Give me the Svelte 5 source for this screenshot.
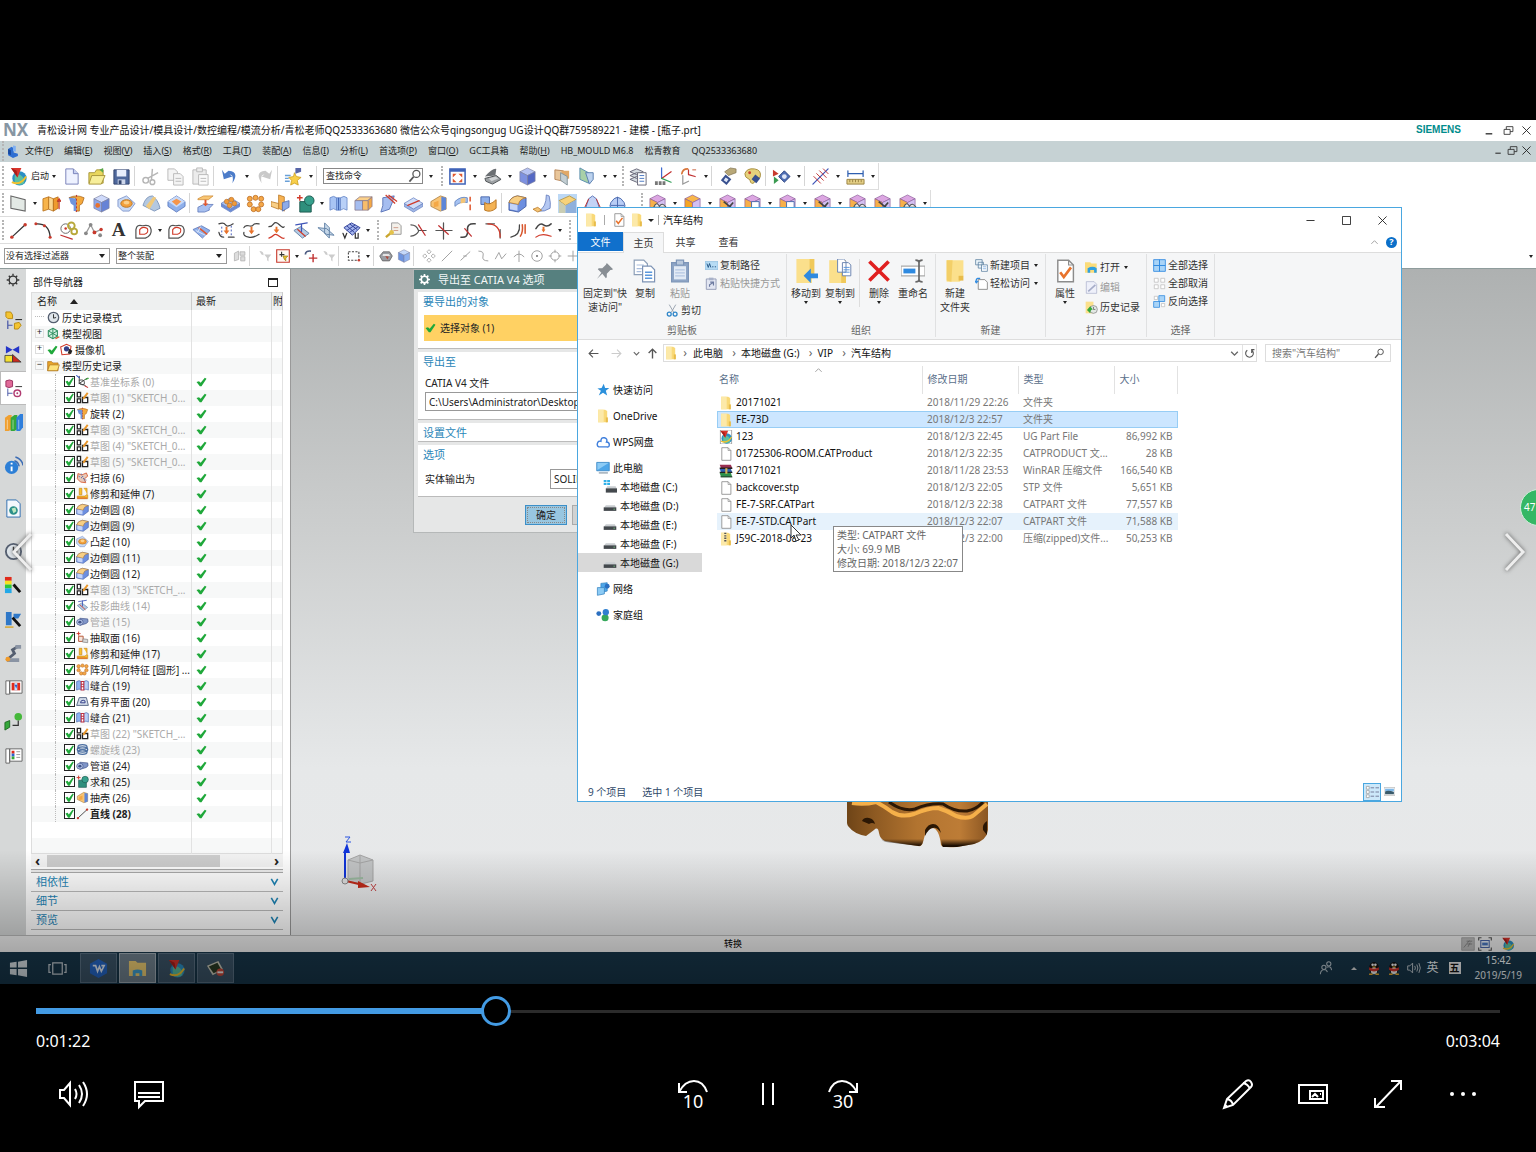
<script>
  const cube = (a, b, c, s = '#7d82a0') =>
    `<g stroke="${s}" stroke-width=".7" stroke-linejoin="round"><path fill="${a}" d="M10 1l8 4-8 4-8-4z"/><path fill="${b}" d="M2 5l8 4v10l-8-4z"/><path fill="${c}" d="M10 9l8-4v10l-8 4z"/></g>`;
  const slab = (a, b, s = '#6d86c4') =>
    `<g stroke="${s}" stroke-width=".8" stroke-linejoin="round"><path fill="${a}" d="M0 10l10-6 10 6-10 6z"/><path fill="${b}" d="M0 10v3l10 6 10-6v-3l-10 6z"/></g>`;
  const curve = (d, c = '#333', w = 1.3) => `<path d="${d}" fill="none" stroke="${c}" stroke-width="${w}" stroke-linecap="round"/>`;
  const purple = (extra) => cube('#dca6e2', '#f7b04a', '#d3c0f2', '#8b5c9a') + extra;
  const nxBall =
    '<circle cx="11" cy="12" r="7.5" fill="#2b8fc4"/><path d="M6 9q4-3 8 1t1 8q-6 2-9-2z" fill="#5cc0a0"/><path d="M3 16q9 4 15-6" fill="none" stroke="#f2c12e" stroke-width="2"/><path d="M2 1l11 0-4 10z" fill="#d8342c"/><path d="M2 1l6 3 1 7z" fill="#a81e1a"/>';
  const folder = '<path fill="#f9d978" d="M3 1h10l3 2v16H3z"/><path fill="#fce9a9" d="M3 1h8v18H3z"/><path fill="#e8bc4b" d="M14 12h3v7h-3z"/>';
  const file = '<path fill="#fff" stroke="#8c8c8c" stroke-width="1.2" d="M4 1h9l4 4v14H4z"/><path fill="none" stroke="#8c8c8c" d="M13 1v4h4"/>';
  const bluePage = '<path fill="#fff" stroke="#8d9fb8" d="M1 1h8l3 3v9H1z"/><path stroke="#a9bddd" d="M3 5h6M3 8h6M3 10.500h4"/><path fill="#fff" stroke="#7d93b5" d="M8 6h7l3 3v10H8z"/><path stroke="#5b97dc" stroke-width="1.200" d="M10 11h6M10 13.500h6M10 16h6"/>';

  const art = {
    nx: nxBall,
    part: '<path d="M3 7l5-3 3 2v6l6 2v3l-7 3-7-4z" fill="#2e6fd2"/><path d="M10 2l4 1v8l-4-1z" fill="#7fb0f2"/><path d="M3 7l4 2v7l-4-2z" fill="#174aa0"/>',
    doc: '<path fill="#eef2ff" stroke="#7882b8" d="M4 2h8l5 5v11H4z"/><path fill="#c6d0f2" stroke="#7882b8" d="M12 2v5h5"/>',
    open: '<path fill="#e9d75e" stroke="#a8963a" d="M2 6h6l2-3h7v14H2z"/><path fill="#f7ee9a" stroke="#a8963a" d="M5 9h14l-4 9H2z"/><path fill="#5aa84c" d="M13 3l4-2v5z"/>',
    save: '<path fill="#4f689c" stroke="#33456e" d="M2 3h16v15H2z"/><path fill="#e8eefc" d="M5 3h10v7H5z"/><path fill="#cdd6ea" d="M6 13h8v5H6z"/><path fill="#33456e" d="M7 14h3v4H7z"/>',
    cut: '<g fill="none" stroke="#b5b5b5" stroke-width="1.500"><circle cx="5" cy="14" r="3"/><circle cx="12" cy="16" r="2.500"/><path d="M7 12l11-6M11 14L12 2"/></g>',
    copy: '<g fill="#f4f4f4" stroke="#b9b9b9"><path d="M2 2h7l3 3v9H2z"/><path d="M8 7h7l3 3v9H8z"/><path d="M10 12h6M10 15h6"/></g>',
    paste: '<g fill="#ececec" stroke="#b9b9b9"><path d="M2 3h14v15H2z"/><path d="M6 1h6v4H6z"/><path fill="#fafafa" d="M8 8h10v11H8z"/><path d="M10 12h6M10 15h6"/></g>',
    undo: '<path fill="#4c7cc9" d="M2 3l2 10 9-3-3-2q5 0 3 9 8-12-4-13L5 7z"/>',
    redo: '<path fill="#c9c9c9" d="M18 3l-2 10-9-3 3-2q-5 0-3 9-8-12 4-13l4 3z"/>',
    star: '<path fill="#f8cf4a" stroke="#c99a1c" stroke-width=".8" d="M11 6l2 4 5 1-4 3 1 5-4-2-4 2 1-5-3-3 5-1z"/><path stroke="#6aa0d8" stroke-width="1.500" d="M1 9h6M1 12h4M1 15h5"/><path fill="#5866a8" d="M12 1h6v4l-6 2z"/>',
    fit: '<path fill="#fff" stroke="#3f63b8" stroke-width="1.600" d="M2 2h16v16H2z"/><path fill="#3f63b8" d="M2 2h16v3H2z"/><g fill="#e0582f"><path d="M5 7h4l-4 4zM15 7h-4l4 4zM5 16h4l-4-4zM15 16h-4l4-4z"/></g>',
    view: '<path fill="#6b6f73" d="M2 10q8-9 12-8l-1 7z"/><path fill="#9da1a4" stroke="#4c5053" d="M2 12l12-3 5 4-9 5-7-3z"/><path fill="#d0d3d5" d="M6 12l7-2 3 2-7 3z"/>',
    shade: cube('#b5c2f2', '#7d91e0', '#5468c4'),
    clip: '<path fill="#e9c69a" stroke="#b8875a" d="M2 3l9 1v11l-9-2z"/><path fill="#e0a868" d="M9 4h8v8l-8 2z"/><path fill="#c3ced3" stroke="#84939b" d="M8 6l7 4v9l-7-5z"/>',
    clip2: '<path fill="#a8d0a8" stroke="#5b8fb0" d="M2 1l9 5v11L2 13z"/><path fill="#bcd2ee" stroke="#5b7fb0" d="M8 6l8 0v7l-4 5z"/>',
    layers: '<g fill="#d5dbe0" stroke="#667"><path d="M1 5l7-3 7 3-7 3zM1 9l7-3 7 3-7 3zM1 13l7-3 7 3-7 3z"/><path fill="#fff" d="M9 6h9v13H9z"/></g><path stroke="#4a78c2" d="M11 9h5M11 12h5M11 15h5"/>',
    csys: curve('M8 12V1', '#3e6bd0') + curve('M8 12l10-7', '#c03030') + curve('M8 12l10 4', '#35a05a') + '<path d="M1 15h3v4H1zM5 15h3v4H5zM9 15h3v4H9z" fill="#777"/>',
    csys2: curve('M10 8V3M10 8l7 2', '#c03030') + curve('M3 7q1-5 6-5', '#d8763a', 1.8) + curve('M4 9v9l6-3', '#999') + '<path d="M14 3h4" stroke="#c8603a"/>',
    show: '<path fill="#38508f" d="M8 8l6 5-5 6-6-5z"/><path fill="#dfe6f7" d="M8 11l3 2-2 3-3-2z"/><path fill="#b8a878" stroke="#7a6d4a" stroke-width=".7" d="M7 5l6-4 6 1v4l-8 3z"/>',
    palette: '<path fill="#e6d17c" stroke="#a58c3a" d="M2 7q2-6 10-5t6 9q-4 0-5 4-3 4-5 1 0-3-3-4-3-1-3-5z"/><circle cx="7" cy="6" r="1.500" fill="#c9412d"/><path fill="#38508f" d="M13 8l5 4-4 5-5-4z"/>',
    move: '<path fill="#c83a2d" d="M1 3l6 4-6 3z"/><path fill="#3a9a50" d="M2 10l5 4-5 4z"/><path fill="#4f6fb5" stroke="#2e4582" d="M13 4l6 6-6 6-6-6z"/><circle cx="13" cy="10" r="2.500" fill="#dfe6f7"/>',
    measure: curve('M2 18L18 2', '#3f55b8') + curve('M3 10l7 7M6 7l7 7M9 4l7 7M13 2l5 5', '#c03030', 1),
    ruler: curve('M2 4v6M18 4v6M2 7h16', '#2f5fb0') + '<path fill="#e4cf86" stroke="#9a8342" d="M1 13h18v5H1z"/><path stroke="#9a8342" d="M4 13v3M7 13v3M10 13v3M13 13v3M16 13v3"/>',
    sketch: '<path fill="#e3e9e5" stroke="#666" stroke-width="1.100" d="M2 2l15 4v12L2 15z"/>',
    extrude: '<g stroke="#b36a14" stroke-width=".8"><path fill="#f7b44c" d="M1 5l6-2v13l-6 2z"/><path fill="#fbd68f" d="M7 3l5 2v13l-5-2z"/><path fill="#ef9a2d" d="M12 5l5-2v12l-5 3z"/></g><path stroke="#d03a2a" stroke-width="1.300" d="M18 6v10M16 8l2-3 2 3"/>',
    revolve: '<path fill="#f5a93c" stroke="#a8641a" stroke-width=".8" d="M2 4q8-4 16 0l-2 6-3 2v6H9V4z"/><path fill="#6f94dc" d="M10 5q-5-1-8-1l2 6 3 2v6h3z"/><path stroke="#c03030" stroke-dasharray="2" d="M10 1v18"/>',
    blueHole: cube('#cfdafa', '#8ea8ec', '#6683d6') + '<circle cx="6" cy="12" r="2.500" fill="#e8732c"/>',
    boss: '<path fill="#c9daf5" stroke="#6d86c4" stroke-width=".8" d="M1 6l9-4 9 8-6 8H6L1 13z"/><ellipse cx="10" cy="10" rx="6" ry="4" fill="#f3a03a" stroke="#b8782a"/><ellipse cx="10" cy="9" rx="3" ry="2" fill="#fbd08a"/>',
    dome: '<path fill="#b4c8e0" stroke="#6a86b0" stroke-width=".8" d="M1 12q3-10 10-10 6 4 8 13l-6 3z"/><path fill="#f0c97c" d="M4 13l8-10 3 1-7 12z"/>',
    pocket: '<path fill="#8fb0ea" stroke="#4c6cb8" stroke-width=".8" d="M1 8l9-6 9 6v5l-9 6-9-6z"/><path fill="#c9daf7" d="M1 8l9-6 9 6-9 6z"/><path fill="#f5954a" d="M5 8l5-3 5 3-5 4z"/>',
    offset: '<path fill="#a8c0f0" stroke="#5a74b8" stroke-width=".8" d="M2 14l6-3h10l-4 4v2l-5 2H2z"/><path fill="#f9c673" stroke="#c8842a" stroke-width=".7" d="M2 5l6-3h10l-5 4H2z"/><path fill="#e0582f" d="M9 6h2v4h2l-3 3-3-3h2z"/>',
    blobs: slab('#a8c0f0', '#6a8bd6') + '<g fill="#f09a3a" stroke="#b86a1a" stroke-width=".6"><circle cx="6" cy="8" r="2.500"/><circle cx="11" cy="6" r="2.500"/><circle cx="14" cy="10" r="2.500"/><circle cx="9" cy="12" r="2.500"/></g>',
    pattern: '<g fill="#f5a848" stroke="#b8661a" stroke-width=".8"><circle cx="4" cy="5" r="2.600"/><circle cx="10" cy="4" r="2.600"/><circle cx="16" cy="5" r="2.600"/><circle cx="4" cy="11" r="2.600"/><circle cx="16" cy="11" r="2.600"/><circle cx="8" cy="16" r="2.600"/><circle cx="13" cy="16" r="2.600"/></g>',
    trim: '<path fill="#f6b252" stroke="#b87420" stroke-width=".8" d="M8 1l6 2v15l-6-3z"/><path fill="#8dabe8" stroke="#4a68ad" stroke-width=".8" d="M12 9l7-2v7l-7 4z"/><path fill="#f9cf86" stroke="#b87420" stroke-width=".8" d="M0 8l8 2v6l-8-3z"/>',
    unite: '<path fill="#2e8f7c" stroke="#1d5a50" d="M4 8h12v11H4z"/><circle cx="14" cy="7" r="5" fill="#36a08c" stroke="#1d5a50"/><path stroke="#d03a2a" stroke-width="1.500" d="M4 1v6M1 4h6"/>',
    sew: '<g stroke="#5f80c4" stroke-width=".8"><path fill="#a8c4f4" d="M1 4q4-3 7 0v13q-3-3-7 0z"/><path fill="#8db2f0" d="M8 4h4v13H8z"/><path fill="#b9d0f7" d="M12 4q4-3 7 0v13q-4-3-7 0z"/></g><path stroke="#3f62b0" d="M10 4v13"/>',
    sewRed: '<g stroke="#3f62b0"><path fill="#8db2f0" d="M1 4q4-3 7 0v13q-3-3-7 0z"/><path fill="#b9d0f7" d="M12 4q4-3 7 0v13q-4-3-7 0z"/></g><path fill="#fff" stroke="#c03040" stroke-width="1.600" d="M8 4h4v13H8zM8 8h4M8 12h4"/>',
    thicken: '<g stroke="#8a7a8a" stroke-width=".8"><path fill="#fbd08a" d="M1 7l5-4h13l-5 4z"/><path fill="#a5bdf0" d="M1 7h8v10H1z"/><path fill="#f8bd6a" d="M9 7h6v10H9z"/><path fill="#f4a845" d="M15 7l4-4v10l-4 4z"/></g>',
    sheet: '<path fill="#a5bdf0" stroke="#5a74b8" d="M4 4l12-2q-2 8-5 14l-9 3q3-6 2-15z"/><path stroke="#d03a2a" stroke-width="1.300" d="M7 1l10 9M10 1l9 7"/>',
    trimSheet: slab('#cfdcf7', '#9fb6e6') + curve('M4 12l12-5', '#d03a2a'),
    shell: '<path fill="#f8c474" stroke="#a87a3a" stroke-width=".8" d="M2 8l10-6 6 2v12l-6 2-10-5z"/><path fill="#5d86d8" d="M13 3l5 1v12l-5 2z"/><path fill="#f4a845" d="M5 9l5-2v6l-5 1z"/>',
    bend: '<path fill="#a5c2f2" stroke="#6d8cc4" d="M1 8q6-6 13-4v5Q7 7 1 13z"/><path fill="#f4c475" d="M7 5l5-1v5l-5 1z"/><path stroke="#e0582f" stroke-width="1.600" d="M17 3v5M17 11v6"/>',
    flange: '<path fill="#8fb0ea" stroke="#4a68ad" d="M2 3h9v8H2z"/><path fill="#f4b355" stroke="#b87420" d="M6 9q5 4 12-3v9q-6 5-12 2z"/>',
    blend: '<path fill="#6d8fe0" stroke="#2f4c96" stroke-width=".8" d="M1 9q2-6 9-7l9 2v9l-8 6-10-2z"/><path fill="#f8cf84" stroke="#b87a2a" stroke-width=".8" d="M1 9q2-6 9-7l9 2q-7 1-8 7z"/><path fill="#c4d4f8" d="M2 10l8 1.500v6L2 16z"/>',
    sweep: '<path fill="#b5c8f2" stroke="#5a74b8" stroke-width=".8" d="M14 1l3 1q2 8 1 13-6 4-12 3 8-4 8-17z"/><path fill="#f4c475" stroke="#b87420" stroke-width=".8" d="M0 16l5-2 4 3-4 2z"/>',
    face: '<path fill="#bcd8f5" d="M0 0h20v20H0z"/><path fill="#f7d27a" stroke="#b89a4a" d="M1 7l11-5 7 4-11 6z"/><path fill="#c9cdb4" d="M1 7l7 5v8H1z"/><path fill="#8fb0dc" d="M8 12l11-6v14H8z"/>',
    draft: '<path fill="#c4d2f5" stroke="#5a74b8" d="M6 5l4-3 4 3 3 9-7 4-7-4z"/><path stroke="#c03030" d="M6 5L1 16M14 5l5 11"/>',
    mesh: '<path fill="#b9cdf5" stroke="#4a68ad" d="M3 9q7-11 14 0l1 4-8 6-8-6z"/><path fill="none" stroke="#4a68ad" d="M3 12h14M10 3v15"/>',
    pu1: purple('<path fill="#eee" stroke="#555" stroke-width="1.100" d="M6 14q3-7 6-1 3-5 7 1z"/>'),
    pu2: cube('#f8b64a', '#f6a623', '#d3c0f2', '#8b5c9a'),
    pu3: purple('<path stroke="#444" stroke-width="1.800" d="M6 8l11 9M16 9l-7 8"/>'),
    pu4: purple('<path fill="#fff" stroke="#4a68ad" d="M9 8h8v10H9z"/>'),
    line: curve('M3 17L17 4') + '<circle cx="3" cy="17" r="1.800" fill="#c83a2d"/><circle cx="17" cy="4" r="1.800" fill="#c83a2d"/>',
    arc: curve('M2 3q14-1 15 14') + '<circle cx="2" cy="3" r="1.600" fill="#c83a2d"/><circle cx="11" cy="5" r="1.600" fill="#c83a2d"/><circle cx="17" cy="17" r="1.600" fill="#c83a2d"/>',
    circles: '<circle cx="7" cy="8" r="5" fill="none" stroke="#666"/><circle cx="13" cy="5" r="3.500" fill="none" stroke="#b8a83a" stroke-width="2"/><circle cx="16" cy="11" r="3" fill="none" stroke="#b8a83a" stroke-width="2"/><circle cx="7" cy="8" r="1.300" fill="#c83a2d"/>' + curve('M2 15l12 4', '#c03030'),
    zig: curve('M2 13L7 4l4 8 7-3', '#999') + '<g fill="#888"><circle cx="2" cy="13" r="2"/><circle cx="7" cy="4" r="2"/><circle cx="17" cy="15" r="2"/></g><circle cx="11" cy="12" r="2" fill="#c83a2d"/><circle cx="18" cy="9" r="1.800" fill="#c83a2d"/>',
    loop: '<path fill="none" stroke="#555" stroke-width="1.300" d="M2 16V9q1-6 7-4 8-2 9 4t-6 9H2z"/><path fill="none" stroke="#d03a2a" stroke-width="1.200" d="M6 14V9q3-4 8-1 2 4-3 6z"/>',
    plane: '<path fill="#8fb0ea" stroke="#5a74b8" stroke-width=".8" d="M1 9l9-4 9 5-8 8z"/><path stroke="#e0582f" stroke-width="1.600" d="M7 7l9 7"/><path stroke="#d8e4fa" d="M4 10l10 5M9 6L6 12"/>',
    bridge: curve('M2 3q5-2 7 1t8-1M2 12q1 5 5 5M12 17h6', '#444') + '<path fill="none" stroke="#3f55b8" stroke-dasharray="2" d="M5 6v9M15 5v11"/><path fill="#e8732c" d="M9 6h2v4h2l-3 4-3-4h2z"/>',
    bridge2: curve('M2 7q1-3 5-2t5-1 6-1M2 12q-1 4 5 5 5 1 11-3', '#444') + '<path fill="#e8732c" d="M9 6h2v4h2l-3 4-3-4h2z"/>',
    bridge3: curve('M2 6q3 0 5-3t6 1 5 2', '#444') + curve('M2 18q3-1 5-3t6 1 5 2', '#d03a2a') + '<path fill="#e8732c" d="M9 6h2v3h2l-3 4-3-4h2z"/>',
    project: '<path fill="#b4cbe4" stroke="#6484a8" d="M2 10l7-4 9 7-7 5z"/>' + curve('M4 4l12-2M10 3v8', '#3f55b8') + curve('M6 9l8 7', '#d03a2a'),
    cross: '<path fill="#c4d6e8" stroke="#6484a8" d="M1 7l9 1 8 7-8-1zM8 2l5 5v11l-5-5z"/>',
    grid: '<path fill="#a5b6ee" stroke="#2f3f98" d="M2 7l8-5 9 5-8 8z"/><path stroke="#2f3f98" d="M5 5l8 7M8 3l8 6M5 10l9-6M8 12l9-6"/>' + curve('M1 13l2 5 2-5M14 13v5h3v-5', '#333'),
    key: '<path fill="#f3f0ea" stroke="#999" d="M8 2h7l3 3v9H8z"/><path stroke="#c98" d="M10 7h5M10 10h5"/><path fill="none" stroke="#c9a52e" stroke-width="2.500" d="M2 17l6-5"/><circle cx="8" cy="12" r="2.500" fill="#e4c24a"/>',
    trimc: curve('M2 4q6 0 8 6h8M2 16q6-1 8-5', '#555') + curve('M10 4l7 11', '#c03030'),
    corner: curve('M10 2v17M2 10h17', '#555') + curve('M5 5l10 9', '#c03030'),
    ess: curve('M2 17q8 1 7-7t8-7', '#444', 1.600) + curve('M6 8l7 8', '#c03030'),
    fillet: curve('M2 3h9M17 9v9', '#555') + curve('M4 3q13 0 13 14', '#d03a2a'),
    offc: curve('M11 4q1 11-9 13', '#444') + curve('M14 4q1 7-2 12M17 4v9', '#d8562d', 1.600),
    wave: curve('M2 8q4-7 8-4t8-1', '#444', 1.600) + curve('M2 17q6-5 16-1', '#d03a2a') + '<path fill="#e8732c" d="M9 6h2v3h1l-2 3-2-3h1z"/>',
    gray1: '<path fill="#ddd" stroke="#aaa" d="M2 6l6-3v12l-6 2zM10 4h7v5h-7zM11 11h6v6h-6z"/>',
    gray2: '<path fill="#ccc" d="M2 3q6 0 6 6l-3-1zM9 8h10l-4 5v5l-2-2v-3z"/>',
    filter: '<path fill="#fff8f4" stroke="#c83a2d" stroke-width="1.600" d="M1 1h18v18H1z"/><path stroke="#333" stroke-width="1.500" d="M8 4v7M5 8h7"/><path fill="#e8c22e" stroke="#9a7c14" d="M10 10h7l-3 3v4l-2-2z"/>',
    snapm: '<path fill="none" stroke="#4a5a80" stroke-width="2.500" d="M2 8q0-6 8-5"/><path stroke="#c03030" stroke-width="2" d="M13 7v12M7 13h12"/>',
    box: '<path fill="none" stroke="#444" stroke-width="1.600" stroke-dasharray="3 2" d="M2 4h15v12H2z"/><circle cx="17" cy="16" r="1.800" fill="#c83a2d"/>',
    solid: '<path fill="#9a9da2" stroke="#555" d="M1 10l5-6h9l4 6-4 7H5z"/><path fill="#e4e4e4" d="M6 7h8l2 3H5z"/><path fill="#b0483a" d="M9 10l5 1-2 4z"/>',
    bcube: cube('#c4d8fa', '#6d94e0', '#8fb2f0'),
    pts: '<g fill="none" stroke="#aaa" stroke-width="1.300"><path d="M10 1l3 3-3 3-3-3zM10 13l3 3-3 3-3-3zM4 7l3 3-3 3-3-3zM16 7l3 3-3 3-3-3z"/></g>',
    seg: curve('M3 17L17 3', '#999'), seg2: curve('M4 16L17 4M8 10h4', '#999'),
    s: curve('M4 3q8 0 6 7t7 7', '#999'), zz: curve('M2 14L7 5l4 9 6-7', '#999'),
    up: curve('M10 3v15M3 11q7-8 14 0', '#999'),
    tgt: '<circle cx="10" cy="10" r="7.500" fill="none" stroke="#999" stroke-width="1.300"/><circle cx="10" cy="10" r="1.500" fill="#777"/>',
    ring: '<circle cx="10" cy="10" r="6" fill="none" stroke="#999" stroke-width="1.300"/><path d="M10 1v4M10 15v4M1 10h4M15 10h4" stroke="#999" stroke-width="1.300"/>',
    plus: curve('M10 3v14M3 10h14', '#999'),
    gear: '<circle cx="10" cy="10" r="5.500" fill="none" stroke="#333" stroke-width="2"/><g stroke="#333" stroke-width="2"><path d="M10 1v3M10 16v3M1 10h3M16 10h3M4 4l2 2M14 14l2 2M16 4l-2 2M6 14l-2 2"/></g>',
    asm: '<path fill="#f4c430" stroke="#b88a12" d="M2 1h5l2 3v4H4L2 6zM11 13l5-1 2 3-3 4h-4z"/><path fill="none" stroke="#4a58a8" stroke-width="1.300" d="M4 10v9M4 15h5"/><path stroke="#333" stroke-width="1.200" d="M12 9h7"/>',
    cons: '<path fill="#2435c8" d="M2 1l7 4 7-4v8L9 5 2 9z"/><path fill="#f4e030" stroke="#333" stroke-width=".8" d="M1 11h8v7H1z"/><path fill="#cc2a1e" stroke="#333" stroke-width=".8" d="M9 18v-8l9 8z"/>',
    nav: '<path fill="#e06a98" stroke="#9a3060" d="M2 2q4-2 7 0v6q-4 2-7 0z"/><path stroke="#333" d="M12 8h7"/><path fill="none" stroke="#4a58a8" d="M4 10v8M4 15h5"/><circle cx="14" cy="15" r="3.500" fill="none" stroke="#b03a70" stroke-width="1.500"/><circle cx="14" cy="15" r="1" fill="#b03a70"/>',
    books: '<path fill="#f0a030" d="M1 5l4-3h3v15l-3 2H1z"/><path fill="#35a83a" d="M7 5l4-3h3v15l-3 2H7z"/><path fill="#2f7fdc" d="M13 5l4-4h3v14l-3 4h-4z"/><path fill="#fff" opacity=".5" d="M3 7h1v10H3zM9 7h1v10H9zM15 7h1v10h-1z"/>',
    info: '<circle cx="8" cy="12" r="7" fill="#2d7fd6"/><path stroke="#fff" stroke-width="2" d="M8 11v5M8 7v2"/><path fill="none" stroke="#3c6cb4" stroke-width="1.500" d="M11 5q4 1 5 6M12 1q7 2 8 9"/>',
    web: '<path fill="#f4f8fc" stroke="#2f6fb0" d="M3 1h10l4 4v14H3z"/><circle cx="10" cy="12" r="4.500" fill="#2b8f8a"/><path fill="#bfe8c0" d="M8 10l4-1 1 4-3 2z"/>',
    clock: '<circle cx="10" cy="10" r="8" fill="#dfe5ea" stroke="#555f70" stroke-width="2"/><path fill="none" stroke="#333" stroke-width="1.500" d="M10 5v6l4-1"/>',
    rainbow: '<path fill="#e02a1a" d="M1 1h7v4H1z"/><path fill="#f6e020" d="M1 5h7v4H1z"/><path fill="#2cc83a" d="M1 9h7v4H1z"/><path fill="#22a8e8" d="M1 13h7v5H1z"/><path stroke="#111" stroke-width="3" d="M10 9l7 8"/>',
    sheetp: '<path fill="#2f78c8" d="M2 2h6v14H2zM10 4h8l-3 5h-5z"/><path stroke="#111" stroke-width="3" d="M9 8l8 9"/><path stroke="#d8a52a" stroke-width="1.500" d="M1 18h9"/>',
    robot: '<path fill="none" stroke="#555f70" stroke-width="3" d="M5 15l6-5-2-4 5-3"/><path fill="#8a94a4" d="M3 15h13v4H3zM12 1h6v4h-6z"/><circle cx="4" cy="16" r="2.500" fill="#f09a2a"/>',
    cardp: '<path fill="#fff" stroke="#666" d="M2 3h4v14H2zM6 3h13v13H6z"/><path fill="#e02a1a" d="M8 5h9v8H8z"/><path fill="#bfe0ff" d="M11 5h3v8h-3z"/><path fill="#2f60d0" d="M11 7l3 0-1 4z"/>',
    tree: '<path fill="#35a83a" stroke="#1f6a22" d="M1 11l5-2v7l-5 3z"/><circle cx="15" cy="5" r="4" fill="#45b83a"/><path fill="none" stroke="#333" stroke-width="1.300" d="M15 9v5H9"/>',
    cardl: '<path fill="#fff" stroke="#666" d="M2 3h4v15H2zM6 3h13v13H6z"/><path fill="#e02a1a" d="M8 5h3v3H8z"/><path fill="#2f60d0" d="M8 8h3v3H8z"/><path fill="#35a83a" d="M8 11h3v3H8z"/><path stroke="#999" d="M13 6h4M13 9h4M13 12h4"/>',
    mview: '<path fill="#d3f0e0" stroke="#2f8f60" stroke-width="1.600" d="M9 2l7 4v8l-7 4-7-4V6z"/><path stroke="#2f8f60" stroke-width="1.500" d="M9 2v16M2 6l14 8M16 6L2 14"/><path stroke="#d8562d" stroke-width="2" d="M13 18l6-3"/>',
    cam: '<path fill="#fff" stroke="#d03a2a" stroke-width="1.600" d="M1 6l9-4 7 3-2 12-12 1z"/><circle cx="10" cy="9" r="4" fill="#34408a"/><path fill="#222" d="M14 9l5 3-2 5-5-1z"/>',
    ofold: '<path fill="#e9a52a" stroke="#a86a14" d="M1 4h6l2 2h8v12H1z"/><path fill="#fde27a" stroke="#a86a14" d="M4 9h15l-3 9H1z"/>',
    datum: curve('M5 13V2M5 13l12-8M5 8q8-2 8 4t-8 1M5 13l9 3', '#444', 1.500) + curve('M1 1l4 3', '#2f50c0', 1.6) + curve('M14 17l4 2', '#c03030', 1.6) + curve('M15 7l4-2', '#35a83a', 1.6),
    sk: '<g fill="#fff" stroke="#222" stroke-width="2"><path d="M2 2h5v7H2zM2 12h5v6H2zM10 10h8v8h-8z"/></g><path stroke="#e8962a" stroke-width="3" d="M11 12l7-9"/>',
    swp: '<path fill="#e8c9b8" stroke="#d8562d" stroke-width="1.300" d="M3 4l6 2 7-3 2 5-5 4 2 6-8-1-5-5z"/><path stroke="#4a68ad" stroke-dasharray="2" stroke-width="1.500" d="M4 8l12 6M8 4l6 12"/>',
    trimx: '<path fill="#f8c22e" stroke="#c8821a" d="M5 2h4v10H5zM12 2h5v9l-3 3H2v4h16v-6"/><path stroke="#d8562d" stroke-width="1.500" d="M2 17h15"/>',
    pipe: '<path fill="#7f95c8" stroke="#3f5288" d="M6 5l12 1q2 5-2 7l-10 3z"/><ellipse cx="6" cy="11" rx="5" ry="4.500" fill="#b4c4e8" stroke="#3f5288"/><ellipse cx="6" cy="11" rx="2.500" ry="2" fill="#3f5288"/>',
    ext: '<path fill="#f5e4da" stroke="#b85a3a" stroke-width="1.500" d="M4 8h7v8H4z"/><path fill="#d8d8d8" stroke="#777" d="M11 12l7 1v5l-8-1z"/><path stroke="#d03a2a" stroke-width="1.500" d="M4 1v6M1 4h6"/>',
    bplane: '<path fill="#d3dcea" stroke="#5a6a88" stroke-width="1.500" d="M5 4h11l3 12H1z"/><path fill="none" stroke="#34408a" stroke-width="1.500" d="M7 12q0-4 4-4t3 4z"/>',
    helix: '<g fill="none" stroke="#4a6ea0" stroke-width="2"><ellipse cx="10" cy="6" rx="7" ry="3.500"/><ellipse cx="10" cy="10" rx="8" ry="4"/><ellipse cx="10" cy="14" rx="7" ry="3.500"/></g>',
    folder, file,
    check: file + '<path fill="none" stroke="#e8732c" stroke-width="2.200" d="M6 11l3 4 6-8"/>',
    pin: '<path fill="#888e94" d="M12 1l7 7-2 1-1 0-4 4 0 4-1 1-4-5-6 6 5-7-4-4 1-1 4 0 4-4z"/>',
    copyb: bluePage,
    pasteb: '<path fill="#8ea5c6" stroke="#7d95b8" d="M3 3h14v16H3z"/><path fill="#e2eaf5" d="M5 6h10v11H5z"/><path fill="#b9c8dc" stroke="#7d95b8" d="M7 1h6v4H7z"/><path stroke="#b4c6e2" d="M6 9h8M6 11.500h8M6 14h8"/>',
    scis: '<g fill="none" stroke-width="1.500"><path stroke="#9aa4b0" d="M5 1l7 12M15 1L8 13"/><circle cx="5" cy="15.500" r="3" stroke="#2f86c8" stroke-width="2"/><circle cx="14" cy="15.500" r="3" stroke="#2f86c8" stroke-width="2"/></g>',
    path: '<path fill="#b7dcf5" stroke="#7fb4dc" d="M0 4h20v12H0z"/><path fill="none" stroke="#1d4f80" stroke-width="1.400" d="M3 7l2 6 2-6 2 6M11 12h2M15 12h2"/>',
    plink: '<path fill="#e2e6f2" stroke="#8c96b0" stroke-width="1.300" d="M2 3h15v16H2z"/><path fill="#a9b2c8" d="M6 1h7v4H6z"/><path fill="none" stroke="#6d7ba0" stroke-width="1.800" d="M7 15v-3l5-3M8 8h5v5"/>',
    moveto: '<path fill="#fbe08c" d="M2 0h13v20H2z"/><path fill="#f0c95a" d="M13 0h4v16h-4z"/><path fill="#2f8ae0" d="M20 12v4h-6v4l-6-6 6-6v4z"/>',
    copyto: '<path fill="#fbe08c" d="M1 1h12v19H1z"/><path fill="#f0c95a" d="M11 1h4v19h-4z"/><path fill="#fff" stroke="#6a84b0" stroke-width=".8" d="M8 0h5l2 2v9H8zM12 3h5l2 2v9h-7z"/><path stroke="#5b97dc" stroke-width=".8" d="M13 7h5M13 9h5M13 11h5"/>',
    del: '<path stroke="#e02020" stroke-width="3" d="M2 2l16 16M18 2L2 18"/>',
    ren: '<path fill="#fff" stroke="#aaa" d="M0 6h20v8H0z"/><path fill="#2f8ae0" d="M2 8h10v4H2z"/><path fill="none" stroke="#666" stroke-width="1.400" d="M12 1q3 0 3 2v14q0 2-3 2M18 1q-3 0-3 2v14q0 2 3 2"/>',
    nfold: '<path fill="#fbe08c" d="M3 1h14v13l-3 5H3z"/><path fill="#f3cf68" d="M3 1h5l-1 18-4-1z"/><path fill="#e8bc4b" d="M13 14h4v4h-4z"/>',
    nitem: '<g fill="#eef6fc" stroke="#5a7fa0" stroke-width="1.200"><path d="M1 1h10v8H1zM5 5h8v9H5z"/><path fill="#fff" d="M10 9h9v10h-9z"/></g><path stroke="#5b97dc" d="M12 12h5M12 15h5"/>',
    easy: '<path fill="#fff" stroke="#777" stroke-width="1.200" d="M5 4h10l4 4v11H5z"/><path fill="none" stroke="#2f8ae0" stroke-width="2" d="M8 2H4Q1 3 2 8M0 6l2 3 3-3"/>',
    openf: '<path fill="#fbdc7a" d="M0 2h8l2 2h8v14H0z"/><path fill="#2fa0e0" d="M4 18v-7q8-4 14 0v7h-4v-4H8v4z"/>',
    edit: '<path fill="#eef0fa" stroke="#a5acc8" d="M2 1h12l4 4v14H2z"/><path stroke="#a5acc8" stroke-width="2.500" d="M5 16L16 6"/>',
    hist: '<path fill="#fbe08c" d="M1 1h12v18H1z"/><circle cx="13" cy="13" r="6" fill="#e2e8e4" stroke="#777"/><path fill="#35a83a" d="M3 14l5-6 4 5q-4 0-4 6z"/><path fill="none" stroke="#444" d="M13 9v4h3"/>',
    sall: '<path fill="#a9d4f7" stroke="#2f8ae0" stroke-width="1.300" d="M1 1h18v18H1z"/><path stroke="#2f8ae0" stroke-width="1.500" d="M10 1v18M1 10h18"/>',
    snone: '<g fill="#fff" stroke="#b5b5b5"><path d="M2 2h6v6H2zM12 2h6v6h-6zM2 12h6v6H2zM12 12h6v6h-6z"/></g>',
    sinv: '<g fill="#a9d4f7" stroke="#2f8ae0" stroke-width="1.200"><path d="M9 1h9v9H9zM1 10h9v9H1z"/></g><g fill="#fff" stroke="#b5b5b5"><path d="M2 2h5v5H2zM13 13h5v5h-5z"/></g>',
    fav: '<path fill="#2b90dc" d="M11 1l2 6 6 0-5 4 2 7-6-4-6 4 3-7-5-3 6-1z"/>',
    cloud: '<path fill="none" stroke="#3f7fdc" stroke-width="2" d="M4 17q-3-1-2-5t5-3q0-6 5-5t3 6q4 0 4 4t-4 3z"/>',
    pc: '<path fill="#4ea6e8" stroke="#2f7fbf" d="M1 2h18v12H1z"/><path fill="#8ccbf5" d="M2 3h16l-16 10z"/><path fill="#9aa8b4" d="M4 16h13v2H4z"/>',
    disk: '<path fill="#c9cdd0" d="M4 9h13l2 4H1z"/><path fill="#44494d" d="M1 12h18v5H1z"/><path fill="#7fe08a" d="M15 14h2v1h-2z"/>',
    diskc: '<path fill="#2fb0e8" d="M1 0h4v3H1zM6 0h4v3H6zM1 4h4v3H1zM6 4h4v3H6z"/><path fill="#c9cdd0" d="M6 9h12l2 4H4z"/><path fill="#44494d" d="M4 12h16v6H4z"/>',
    net: '<path fill="#4ea6e8" stroke="#2f7fbf" d="M7 2l9-1v12l-9 2z"/><path fill="#8ccbf5" stroke="#2f7fbf" d="M2 8h10v9l-10 2z"/><circle cx="16" cy="6" r="3.500" fill="#2b6fc0"/>',
    home: '<circle cx="4" cy="8" r="3.500" fill="#2b6fc0"/><circle cx="13" cy="14" r="5" fill="#35a85a"/><circle cx="14" cy="6" r="4.500" fill="#2f7fd0"/>',
    ug: '<path fill="#fff" stroke="#888" d="M2 0h16v20H2z"/>' + nxBall,
    rar: '<path fill="#9a2f50" d="M1 1h16l2 5H3z"/><path fill="#2f60b0" d="M1 7h16l2 5H3z"/><path fill="#2f8f4a" d="M1 13h16l2 6H3z"/><path fill="#222" d="M1 5h18v2H1zM1 11h18v2H1zM2 18h17v1H2z"/><path fill="#d8b45a" d="M9 6h3v8H9z"/>',
    zip: folder + '<path stroke="#555" stroke-width="3" stroke-dasharray="2 1.500" d="M9 1v14"/>',
    win: '<path fill="#d5dde2" d="M1 4l7-1v6H1zM9.500 2.800L19 1v8H9.500zM1 10.500h7V17l-7-1zM9.500 10.500H19V19l-9.500-1.800z"/>',
    tv: '<g fill="none" stroke="#c3ccd2" stroke-width="1.300"><path d="M5 4h10v12H5zM3 6H1v8h2M17 6h2v8h-2"/></g>',
    wps: '<path fill="#2567c8" d="M10 0l9 5v10l-9 5-9-5V5z"/><path fill="none" stroke="#e4ecf8" stroke-width="1.700" d="M4 7h3l2 6 2-5 2 5 3-6h-3"/>',
    tfold: '<path fill="#f0cf74" d="M1 2h7l2 2h9v14H1z"/><path fill="#3f9fd0" d="M5 18v-6q5-2 10 0v6h-3v-3H8v3z"/>',
    rec: '<path fill="#c9c9b9" d="M1 7l12-5 5 9-11 6z"/><path fill="#2a3a24" d="M3 8l9-4 4 7-8 4z"/><circle cx="15" cy="14" r="4" fill="#c8483a"/><path fill="#eee" d="M12 13h6v2h-6z"/>',
    people: '<g fill="none" stroke="#b9c6ce" stroke-width="1.500"><circle cx="7" cy="9" r="3"/><path d="M2 19q0-6 5-7 4 0 5 4"/><circle cx="14" cy="4" r="3"/><path d="M11 9q6-3 7 4"/></g>',
    qq: '<ellipse cx="10" cy="10" rx="7" ry="8.500" fill="#111"/><ellipse cx="10" cy="14" rx="4.500" ry="5" fill="#f2f2f2"/><path fill="#d8342c" d="M3 9q7 4 14 0v4q-7 4-14 0z"/><circle cx="8" cy="5.500" r="1.800" fill="#fff"/><circle cx="12" cy="5.500" r="1.800" fill="#fff"/><path fill="#f4b02a" d="M7 8h6l-3 2zM3 18h5v2H3zM12 18h5v2h-5z"/>',
    vol: '<g fill="none" stroke="#c3ccd2" stroke-width="1.400"><path d="M1 7h3l4-4v14l-4-4H1zM11 7q2 3 0 6M14 5q3 5 0 10M17 3q4 7 0 14"/></g>',
    st1: '<path fill="#bfbfbf" stroke="#999" d="M1 1h18v18H1z"/><path stroke="#777" d="M4 15l8-10M8 6h8M9 10h7M10 14l3-6"/>',
    st2: '<path fill="none" stroke="#555" stroke-width="1.600" d="M1 5V1h4M15 1h4v4M19 15v4h-4M5 19H1v-4"/><path fill="#e8f0fa" stroke="#4a68ad" stroke-width="1.500" d="M4 5h12v10H4z"/><path fill="#4a78c2" d="M6 8h8v4H6z"/>',
    details: '<g fill="#fff" stroke="#999"><path d="M2 2h4v4H2zM2 8h4v4H2zM2 14h4v4H2z"/></g><path stroke="#557" stroke-dasharray="5 2" d="M8 4h12M8 10h12M8 16h12"/>',
    thumbs: '<path fill="#fff" stroke="#999" d="M0 3h20v14H0z"/><path fill="#7fb8e8" d="M2 5h16v5H2z"/><path fill="#3a5a6a" d="M2 10q6-3 16 1v4H2z"/>',
    mag: '<circle cx="12" cy="7" r="5" fill="none" stroke="#555" stroke-width="1.800"/><path stroke="#555" stroke-width="2.500" d="M8 11l-6 7"/>',
    reload: '<path fill="none" stroke="#555" stroke-width="2" d="M14 4a7 7 0 1 1-8 0M14 9V3h5"/>',
    back: '<path fill="none" stroke="#555" stroke-width="2" d="M19 10H2M9 3l-7 7 7 7"/>',
    fwd: '<path fill="none" stroke="#ccc" stroke-width="2" d="M1 10h17M11 3l7 7-7 7"/>',
    upa: '<path fill="none" stroke="#555" stroke-width="2.500" d="M10 19V2M3 9l7-7 7 7"/>',
    dn: '<path fill="none" stroke="#666" stroke-width="2.500" d="M4 7l6 6 6-6"/>',
    upc: '<path fill="none" stroke="#999" stroke-width="2" d="M3 13l7-7 7 7"/>',
    min: '<path stroke="#222" stroke-width="2" d="M1 10h18"/>',
    max: '<path fill="none" stroke="#222" stroke-width="2" d="M1 1h18v18H1z"/>',
    cls: '<path stroke="#222" stroke-width="2" d="M1 1l18 18M19 1L1 19"/>',
    minb: '<path stroke="#333" stroke-width="2.500" d="M3 16h12"/>',
    rest: '<path fill="none" stroke="#333" stroke-width="1.600" d="M2 8h11v9H2zM6 8V3h12v9h-5"/>',
    wrench: '<circle cx="10" cy="10" r="6" fill="none" stroke="#fff" stroke-width="3"/><g stroke="#fff" stroke-width="3"><path d="M10 0v4M10 16v4M0 10h4M16 10h4M3 3l3 3M14 14l3 3M17 3l-3 3M6 14l-3 3"/></g>'
  };

  // '|' separator, ':' grip, 'v' and 'n' drop-down arrows, '-' a short gap
  const row1 = ['doc', 'open', 'save', '|', 'cut', 'copy', 'paste', '|', 'undo', 'v', 'redo', '|', 'star', 'v', '|'];
  const row1b = ['v', '-', ':', 'fit', 'v', 'view', 'v', 'shade', 'v', 'clip', 'clip2', 'v', 'v', ':', 'layers', 'csys', 'csys2', 'v', '|', 'show', 'palette', '|', 'move', 'v', '|', 'measure', 'v', 'ruler', 'v'];
  const row2 = [':', 'sketch', 'n', 'extrude', 'revolve', 'blueHole', 'boss', 'dome', 'pocket', '|', 'offset', 'blobs', 'pattern', 'trim', 'unite', 'n', 'sew', 'thicken', 'sheet', 'trimSheet', 'shell', 'bend', 'flange', '|', 'blend', 'sweep', 'face', 'draft', 'mesh', '-', '-', '-', ':', 'pu1', 'v', 'pu2', 'v', 'pu3', 'pu4', 'v', 'pu4', 'v', 'pu3', 'v', 'pu1', 'pu3', 'pu1', 'v'];
  const row3 = [':', 'line', 'arc', 'circles', 'zig', 'A', 'loop', 'n', 'loop', 'plane', 'bridge', 'bridge2', 'bridge3', 'project', 'cross', 'grid', 'n', '-', ':', 'key', 'trimc', 'corner', 'ess', 'fillet', 'offc', 'wave', 'n', '-', ':', 'tgt'];
  const row4 = ['gray1', '|', '-', 'gray2', 'filter', 'v', 'snapm', 'gray2', '|', '-', 'box', 'v', '|', 'solid', 'bcube', '|', '-', 'pts', 'seg', 'seg2', 's', 'zz', 'up', 'tgt', 'ring', 'plus'];

  const menus = [['文件', 'F'], ['编辑', 'E'], ['视图', 'V'], ['插入', 'S'], ['格式', 'R'], ['工具', 'T'], ['装配', 'A'], ['信息', 'I'], ['分析', 'L'], ['首选项', 'P'], ['窗口', 'O'], ['GC工具箱'], ['帮助', 'H'], ['HB_MOULD M6.8'], ['松青教育'], ['QQ2533363680']];
  const rail = ['gear', 'asm', 'cons', 'nav', 'books', 'info', 'web', 'clock', 'rainbow', 'sheetp', 'robot', 'cardp', 'tree', 'cardl'];
  const features = [
    ['datum', '基准坐标系 (0)', 1], ['sk', '草图 (1) "SKETCH_0...', 1], ['revolve', '旋转 (2)'], ['sk', '草图 (3) "SKETCH_0...', 1],
    ['sk', '草图 (4) "SKETCH_0...', 1], ['sk', '草图 (5) "SKETCH_0...', 1], ['swp', '扫掠 (6)'], ['trimx', '修剪和延伸 (7)'],
    ['blend', '边倒圆 (8)'], ['blend', '边倒圆 (9)'], ['boss', '凸起 (10)'], ['blend', '边倒圆 (11)'], ['blend', '边倒圆 (12)'],
    ['sk', '草图 (13) "SKETCH_...', 1], ['project', '投影曲线 (14)', 1], ['pipe', '管道 (15)', 1], ['ext', '抽取面 (16)'],
    ['trimx', '修剪和延伸 (17)'], ['pattern', '阵列几何特征 [圆形] ...'], ['sewRed', '缝合 (19)'], ['bplane', '有界平面 (20)'],
    ['sewRed', '缝合 (21)'], ['sk', '草图 (22) "SKETCH_...', 1], ['helix', '螺旋线 (23)', 1], ['pipe', '管道 (24)'],
    ['unite', '求和 (25)'], ['shell', '抽壳 (26)'], ['line', '直线 (28)', 2]
  ];
  const places = [
    ['fav', '快速访问'], ['folder', 'OneDrive'], ['cloud', 'WPS网盘'], ['pc', '此电脑'],
    ['diskc', '本地磁盘 (C:)', 1], ['disk', '本地磁盘 (D:)', 1], ['disk', '本地磁盘 (E:)', 1], ['disk', '本地磁盘 (F:)', 1], ['disk', '本地磁盘 (G:)', 2],
    ['net', '网络'], ['home', '家庭组']
  ];
  const files = [
    ['folder', '20171021', '2018/11/29 22:26', '文件夹', ''],
    ['folder', 'FE-73D', '2018/12/3 22:57', '文件夹', ''],
    ['ug', '123', '2018/12/3 22:45', 'UG Part File', '86,992 KB'],
    ['file', '01725306-ROOM.CATProduct', '2018/12/3 22:35', 'CATPRODUCT 文...', '28 KB'],
    ['rar', '20171021', '2018/11/28 23:53', 'WinRAR 压缩文件', '166,540 KB'],
    ['file', 'backcover.stp', '2018/12/3 22:05', 'STP 文件', '5,651 KB'],
    ['file', 'FE-7-SRF.CATPart', '2018/12/3 22:38', 'CATPART 文件', '77,557 KB'],
    ['file', 'FE-7-STD.CATPart', '2018/12/3 22:07', 'CATPART 文件', '71,588 KB'],
    ['zip', 'J59C-2018-08-23', '2018/12/3 22:00', '压缩(zipped)文件...', '50,253 KB']
  ];
  const crumbs = ['此电脑', '本地磁盘 (G:)', 'VIP', '汽车结构'];
</script>

{#snippet ico(name, size = 'm')}
  <svg class="ico {size}" viewBox="0 0 20 20" aria-hidden="true">{@html art[name]}</svg>
{/snippet}

{#snippet tick()}
  <svg class="tick" viewBox="0 0 12 12" aria-hidden="true"><path fill="#1fa83a" d="M0 6l3-1 2 2 5-6 2 1-6 9H4z" /></svg>
{/snippet}

{#snippet tools(list, size = 'm')}
  {#each list as t}
    {#if t === '|'}<i class="sep"></i>
    {:else if t === ':'}<i class="grip"></i>
    {:else if t === '-'}<i class="space"></i>
    {:else if t === 'v' || t === 'n'}<button class="drop {t}" aria-label="更多"></button>
    {:else if t === 'A'}<button class="tool letter">A</button>
    {:else}<button class="tool {size}" aria-label={t}>{@render ico(t, size)}</button>{/if}
  {/each}
{/snippet}

{#snippet big(icon, text, drop = false, cls = '')}
  <button class="big {cls}">{@render ico(icon, 'xl')}<span>{text}</span>{#if drop}<i class="caret"></i>{/if}</button>
{/snippet}

{#snippet small(icon, text, drop = false, cls = '')}
  <button class="small {cls}">{@render ico(icon, 's')}<span>{text}</span>{#if drop}<i class="caret"></i>{/if}</button>
{/snippet}

<main class="player">
  <section class="video">
    <header class="title">
      <b class="logo">NX</b>
      <span class="caption">青松设计网 专业产品设计/模具设计/数控编程/模流分析/青松老师QQ2533363680 微信公众号qingsongug UG设计QQ群759589221 - 建模 - [瓶子.prt]</span>
      <b class="brand">SIEMENS</b>
      <div class="winbtns">
        <button aria-label="最小化">{@render ico('minb', 'xs')}</button><button aria-label="还原">{@render ico('rest', 'xs')}</button><button aria-label="关闭">{@render ico('cls', 'xxs')}</button>
      </div>
    </header>
    <nav class="menu">
      <i class="grip"></i>{@render ico('part', 's')}
      {#each menus as [label, key]}
        <button>{label}{#if key}(<u>{key}</u>){/if}</button>
      {/each}
      <div class="winbtns right">
        <button aria-label="最小化">{@render ico('minb', 'xxs')}</button><button aria-label="还原">{@render ico('rest', 'xs')}</button><button aria-label="关闭">{@render ico('cls', 'xxs')}</button>
      </div>
    </nav>
    <div class="bars">
      <div class="bar">
        <i class="grip"></i>
        <button class="tool" aria-label="NX">{@render ico('nx')}</button>
        <button class="start">启动</button><button class="drop v" aria-label="更多"></button>
        {@render tools(row1)}
        <label class="find"><input aria-label="查找命令" value="查找命令" />{@render ico('mag', 's')}</label>
        {@render tools(row1b)}
      </div>
      <div class="bar">{@render tools(row2)}</div>
      <div class="bar">{@render tools(row3)}</div>
      <div class="bar last">
        <label class="pick"><select aria-label="选择过滤器"><option>没有选择过滤器</option></select></label>
        <label class="pick wide"><select aria-label="选择范围"><option>整个装配</option></select></label>
        {@render tools(row4, 's')}
        <button class="drop v end" aria-label="更多"></button>
      </div>
    </div>

    <div class="work">
      <aside class="rail">
        {#each rail as r}<button class="r-{r}" aria-label={r}>{@render ico(r, r === 'gear' ? 's' : 'm')}</button>{/each}
      </aside>
      <section class="panel">
        <h2>部件导航器<button class="pop" aria-label="弹出"></button></h2>
        <table class="tree">
          <thead><tr><th>名称 <i class="sort"></i></th><th>最新</th><th>附</th></tr></thead>
          <tbody>
            <tr><td><div class="node"><i class="ex none"></i>{@render ico('clock', 's')}<span>历史记录模式</span></div></td><td></td><td></td></tr>
            <tr><td><div class="node"><i class="ex">+</i>{@render ico('mview', 's')}<span>模型视图</span></div></td><td></td><td></td></tr>
            <tr><td><div class="node"><i class="ex">+</i>{@render tick()}{@render ico('cam', 's')}<span>摄像机</span></div></td><td></td><td></td></tr>
            <tr><td><div class="node"><i class="ex">−</i>{@render ico('ofold', 's')}<span>模型历史记录</span></div></td><td></td><td></td></tr>
            {#each features as [icon, label, state]}
              <tr>
                <td><label class="node leaf" class:dim={state === 1} class:strong={state === 2}><input type="checkbox" checked />{@render ico(icon, 's')}<span>{label}</span></label></td>
                <td>{@render tick()}</td><td></td>
              </tr>
            {/each}
            <tr><td></td><td></td><td></td></tr>
            <tr><td></td><td></td><td></td></tr>
          </tbody>
        </table>
        <div class="hscroll"><span>‹</span><i></i><span>›</span></div>
        <div class="split"></div>
        {#each ['相依性', '细节', '预览'] as s}
          <button class="fold">{s}<svg viewBox="0 0 10 10" aria-hidden="true"><path d="M1 1l4 7 4-7" /></svg></button>
        {/each}
      </section>
      <section class="scene">
        <svg class="axis" viewBox="0 0 42 58" aria-hidden="true">
          <path d="M7 24l12-5 13 5v21l-12 3-13-3z" fill="#c3c5c6" stroke="#a5a5a5" />
          <path d="M7 24l12 3 13-3M19 19v28" fill="none" stroke="#a5a5a5" />
          <path d="M4 44V14" stroke="#1034d8" stroke-width="2" /><path d="M6 7l3 10H2z" fill="#1034d8" />
          <path d="M4 1h5L5 6h5" fill="none" stroke="#2a55e0" />
          <path d="M5 45l17 4" stroke="#c02a1a" stroke-width="2" /><path d="M17 45l12 6-12 1z" fill="#c02a1a" />
          <path d="M30 48l5 7M35 48l-5 7" stroke="#c04040" />
          <path d="M8 43l14-1" stroke="#9ab89f" stroke-width="2" />
          <circle cx="4" cy="45" r="3" fill="#ddd" stroke="#888" />
        </svg>
        <svg class="bottle" viewBox="0 0 142 46" aria-hidden="true">
          <defs>
            <linearGradient id="wood"><stop offset="0" stop-color="#6e4417" /><stop offset=".2" stop-color="#8e5a22" /><stop offset=".5" stop-color="#b27430" /><stop offset=".8" stop-color="#bd7c36" /><stop offset="1" stop-color="#8b5622" /></linearGradient>
            <linearGradient id="foot" x2="0" y2="1"><stop offset=".7" stop-color="#1c0e02" stop-opacity="0" /><stop offset=".95" stop-color="#1c0e02" /></linearGradient>
          </defs>
          <path fill="url(#wood)" d="M0 0h141v28q-1 10-14 14l-17 3q-15 1-16-2-2-17-9-17-6 0-9 14-1 5-5 4l-33-5q-5-2-6-8-1-7-5-3l-8 6q-12-2-18-10-2-4-1-12z" />
          <path fill="url(#foot)" d="M0 18v6q5 9 18 10l4-4 6-3q4 1 5 8 1 4 6 5l33 4q4 0 5-9l17 0q0 8 2 10l14 0 17-3q11-4 13-14v-4z" />
          <path fill="#2b1704" d="M15 19q2-4 7-3 5 1 6 6-3-2-6 0zM78 28q3-6 8-6 6 0 8 9-4-6-8-5-4 0-8 8zM136 28q-1-6 4-9v14z" />
          <path fill="none" stroke="#2b1704" stroke-width="3" d="M42 0q14 10 26 7 14-6 28-5 12 8 24 7 10-2 16-9" />
          <path fill="none" stroke="#f5b04a" stroke-width="4" d="M5 1q12 2 24-1 8 4 16 10 10 6 22 2 14-6 24-6 10 3 18 8 12 4 18-1l13-11" />
        </svg>
      </section>

      <section class="dialog">
        <h3>{@render ico('wrench', 'xs')}导出至 CATIA V4 选项</h3>
        <div class="card a"><h4>要导出的对象</h4><button class="chosen">{@render tick()}选择对象 (1)</button></div>
        <div class="card b"><h4>导出至</h4><label>CATIA V4 文件<input value="C:\Users\Administrator\Desktop" /></label></div>
        <div class="card c"><h4>设置文件</h4></div>
        <div class="card d"><h4>选项</h4><label>实体输出为<select><option>SOLID</option></select></label></div>
        <div class="acts"><button class="ok">确定</button><button>取消</button></div>
      </section>
    </div>

    <footer class="status"><span>转换</span><div>{@render ico('st1', 's')}{@render ico('st2', 's')}{@render ico('nx', 's')}</div></footer>

    <div class="taskbar">
      <button aria-label="开始">{@render ico('win', 'm')}</button><button aria-label="任务视图">{@render ico('tv', 'm')}</button>
      <button class="app first" aria-label="WPS">{@render ico('wps', 'm')}</button><button class="app on" aria-label="资源管理器">{@render ico('tfold', 'm')}</button>
      <button class="app" aria-label="NX">{@render ico('nx', 'm')}</button><button class="app" aria-label="录制">{@render ico('rec', 'm')}</button>
      <div class="tray">
        {@render ico('people', 's')}<i class="tri"></i>{@render ico('qq', 's')}{@render ico('qq', 's')}{@render ico('vol', 's')}<span>英</span><b>五</b>
        <time>15:42<br />2019/5/19</time>
      </div>
    </div>

    <section class="explorer">
      <header class="xtitle">
        {@render ico('folder', 's')}<i class="bar1"></i>{@render ico('check', 's')}{@render ico('folder', 's')}<i class="qat"></i><i class="bar1"></i><span>汽车结构</span>
        <div class="xbtns"><button aria-label="最小化">{@render ico('min', 'xxs')}</button><button aria-label="最大化">{@render ico('max', 'xxs')}</button><button aria-label="关闭">{@render ico('cls', 'xxs')}</button></div>
      </header>
      <nav class="tabs">
        <button class="file">文件</button><button class="cur">主页</button><button>共享</button><button>查看</button>
        <div class="help">{@render ico('upc', 'xxs')}<button aria-label="帮助">?</button></div>
      </nav>
      <div class="ribbon">
        <div class="group g1">
          <div class="items">
            {@render big('pin', '固定到"快\n速访问"', false, 'pin')}
            {@render big('copyb', '复制')}
            <div class="stack">{@render big('pasteb', '粘贴', false, 'off')}{@render small('scis', '剪切')}</div>
            <div class="list">{@render small('path', '复制路径')}{@render small('plink', '粘贴快捷方式', false, 'off')}</div>
          </div>
          <p>剪贴板</p>
        </div>
        <div class="group g2">
          <div class="items">{@render big('moveto', '移动到', true)}{@render big('copyto', '复制到', true)}<i class="vr"></i>{@render big('del', '删除', true)}{@render big('ren', '重命名')}</div>
          <p>组织</p>
        </div>
        <div class="group g3">
          <div class="items">{@render big('nfold', '新建\n文件夹')}<div class="list">{@render small('nitem', '新建项目', true)}{@render small('easy', '轻松访问', true)}</div></div>
          <p>新建</p>
        </div>
        <div class="group g4">
          <div class="items">{@render big('check', '属性', true)}<div class="list loose">{@render small('openf', '打开', true)}{@render small('edit', '编辑', false, 'off')}{@render small('hist', '历史记录')}</div></div>
          <p>打开</p>
        </div>
        <div class="group g5">
          <div class="items"><div class="list">{@render small('sall', '全部选择')}{@render small('snone', '全部取消')}{@render small('sinv', '反向选择')}</div></div>
          <p>选择</p>
        </div>
      </div>
      <div class="addr">
        <div class="hist">
          <button aria-label="后退">{@render ico('back', 'xs')}</button><button aria-label="前进">{@render ico('fwd', 'xs')}</button><button aria-label="最近">{@render ico('dn', 'xxs')}</button><button aria-label="向上">{@render ico('upa', 'xs')}</button>
        </div>
        <div class="path">{@render ico('folder', 's')}{#each crumbs as c}<i>›</i><a href="#top">{c}</a>{/each}<span class="grow"></span>{@render ico('dn', 'xs')}<button aria-label="刷新">{@render ico('reload', 'xs')}</button></div>
        <label class="search"><input aria-label="搜索" placeholder="搜索&quot;汽车结构&quot;" />{@render ico('mag', 'xs')}</label>
      </div>
      <div class="xbody">
        <nav class="places">
          {#each places as [icon, label, lvl]}
            <a href="#top" class:sub={lvl} class:sel={lvl === 2}>{@render ico(icon, 's')}{label}</a>
          {/each}
        </nav>
        <div class="listing">
          <table class="files">
            <thead><tr><th>名称{@render ico('upc', 'xxs')}</th><th>修改日期</th><th>类型</th><th>大小</th></tr></thead>
            <tbody>
              {#each files as [icon, name, date, type, size], i}
                <tr class:sel={i === 1} class:hover={i === 7}><td><span class="fname">{@render ico(icon, 's')}{name}</span></td><td>{date}</td><td>{type}</td><td>{size}</td></tr>
              {/each}
            </tbody>
          </table>
          <svg class="cursor" viewBox="0 0 12 18" aria-hidden="true"><path d="M1 1v13l3-3 2 6 3-1-3-5h5z" fill="#fff" stroke="#333" /></svg>
          <div class="tip" role="tooltip">类型: CATPART 文件<br />大小: 69.9 MB<br />修改日期: 2018/12/3 22:07</div>
        </div>
      </div>
      <footer class="xstatus"><span>9 个项目</span><span>选中 1 个项目</span><div><button class="on" aria-label="详细信息">{@render ico('details', 's')}</button><button aria-label="缩略图">{@render ico('thumbs', 'xs')}</button></div></footer>
    </section>

    <div class="shade"></div>
    <button class="turn prev" aria-label="上一个"><svg viewBox="0 0 24 40"><path d="M21 2L4 20l17 18" /></svg></button>
    <button class="turn next" aria-label="下一个"><svg viewBox="0 0 24 40"><path d="M3 2l17 18L3 38" /></svg></button>
    <span class="badge">47</span>
  </section>

  <section class="controls">
    <input class="seek" type="range" min="0" max="1000" value="310" aria-label="播放进度" />
    <div class="times"><span>0:01:22</span><span>0:03:04</span></div>
    <div class="keys">
      <div>
        <button aria-label="音量"><svg viewBox="0 0 32 32"><path d="M2 12h4l6-7v22l-6-7H2zM17 11q3 5 0 10M21 7q6 9 0 18M25 4q8 12 0 24" /></svg></button>
        <button aria-label="字幕"><svg viewBox="0 0 32 32"><path d="M2 4h28v19H12l-6 6v-6H2z" /><path d="M5 15h22M5 19h22" /></svg></button>
      </div>
      <div>
        <button class="jump" aria-label="后退10秒"><svg viewBox="0 0 32 32"><path d="M2 5v9h8M2 14Q8 3 17 3t13 11" /></svg><span>10</span></button>
        <button aria-label="暂停"><svg viewBox="0 0 32 32"><path d="M11 5v22M21 5v22" /></svg></button>
        <button class="jump" aria-label="前进30秒"><svg viewBox="0 0 32 32"><path d="M30 5v9h-8M30 14Q24 3 15 3T2 14" /></svg><span>30</span></button>
      </div>
      <div>
        <button aria-label="编辑"><svg viewBox="0 0 32 32"><path d="M2 30l3-9L24 3q3-2 5 1t0 5L11 27zM5 21q5 1 6 6M21 5q5 1 7 6M3 27q1 0 2 2" /></svg></button>
        <button aria-label="迷你视图"><svg viewBox="0 0 32 32"><path d="M2 7h28v18H2z" /><path d="M13 13h13v8H13zM15 19l3-3 3 3M23 16h1" /></svg></button>
        <button aria-label="全屏"><svg viewBox="0 0 32 32"><path d="M4 29L28 4M19 3h10v9M3 20v9h10" /></svg></button>
        <button aria-label="更多"><svg viewBox="0 0 32 32"><g class="dots"><circle cx="5" cy="16" r="2" /><circle cx="16" cy="16" r="2" /><circle cx="27" cy="16" r="2" /></g></svg></button>
      </div>
    </div>
  </section>
</main>

<style>
  :global(body) { background: #000; }
  * { box-sizing: border-box; }
  button, input, select { font: inherit; color: inherit; margin: 0; padding: 0; border: 0; background: none; border-radius: 0; }
  a { color: inherit; text-decoration: none; }
  h2, h3, h4, p { margin: 0; font-weight: 400; font-size: inherit; }
  i { font-style: normal; }
  button { display: inline-flex; align-items: center; justify-content: center; flex: none; white-space: nowrap; }

  .player { min-height: 100vh; padding-top: 120px; background: #000; color: #222; font: 10px/14px 'Noto Sans', 'Noto Sans CJK SC', sans-serif; }
  .video { position: relative; aspect-ratio: 16 / 9; display: flex; flex-direction: column; overflow: hidden; background: #fff; }

  .ico { flex: none; display: block; width: 19px; height: 19px; }
  .ico.s { width: 14px; height: 14px; }
  .ico.xs { width: 11px; height: 11px; }
  .ico.xxs { width: 9px; height: 9px; }
  .ico.xl { width: 24px; height: 24px; }
  .tick { width: 11px; height: 10px; flex: none; display: block; }

  .title { display: flex; align-items: center; height: 21px; padding: 0 5px 1px 3px; color: #111; flex: none; }
  .logo { font: 700 17px/20px 'Noto Sans', sans-serif; color: #8796a3; width: 34px; }
  .caption { flex: 1; white-space: nowrap; }
  .brand { color: #008c8c; margin-right: 23px; font-family: 'Liberation Sans', sans-serif; }
  .winbtns { display: flex; gap: 8px; align-items: center; }
  .menu { display: flex; align-items: center; height: 21px; background: #c6d2d4; flex: none; font-size: 9px; padding: 0 5px 2px 0; }
  .menu > button { margin-left: 11px; }
  .menu > .ico { margin-right: -6px; }
  .right { margin-left: auto; gap: 4px; }

  .bars { background: #fff; border-bottom: 1px solid #8f9c9c; flex: none; padding-top: 1px; }
  .bar { display: flex; align-items: center; width: max-content; height: 27px; border-bottom: 1px solid #ddd; border-right: 1px solid #ddd; }
  .bar.last { width: auto; height: 24px; border: 0; padding-left: 4px; }
  .grip { width: 6px; height: 20px; flex: none; border-left: 2px dotted #b5b5b5; margin-left: 2px; margin-right: -2px; }
  .sep { width: 4px; height: 20px; flex: none; border-left: 1px solid #d5d5d5; }
  .space { width: 3px; flex: none; }
  .tool { width: 25px; height: 25px; }
  .tool.s { width: 18px; }
  .letter { font: 700 19px/20px 'Liberation Serif', serif; color: #333; }
  .start { width: 18px; font-size: 9px; }
  .drop { width: 10px; height: 20px; }
  .drop.n { width: 8px; }
  .drop::before, .caret { content: ''; border: 2px solid transparent; border-top: 3px solid #222; border-bottom: 0; }
  .drop.end { margin-left: auto; }
  .find { display: flex; align-items: center; width: 100px; height: 16px; border: 1px solid #888; margin: 0 3px; padding: 0 2px; font-size: 9px; }
  .find input { width: 82px; }
  .pick { display: flex; align-items: center; justify-content: space-between; width: 106px; height: 16px; border: 1px solid #999; font-size: 9px; margin-right: 6px; padding-right: 4px; flex: none; }
  .pick::after { content: ''; border: 3px solid transparent; border-top: 4px solid #222; border-bottom: 0; }
  .pick select { flex: 1; height: 14px; padding-left: 1px; appearance: none; }
  .pick.wide { width: 111px; margin-right: 4px; }

  .work { position: relative; flex: 1; display: flex; min-height: 0; }
  .rail { width: 26px; background: #d6d8d8; display: flex; flex-direction: column; align-items: center; flex: none; }
  .rail button { width: 26px; height: 34px; }
  .rail .r-gear { height: 22px; margin-bottom: 12px; }
  .rail .r-nav { background: #fff; border: 1px solid #bbb; border-right: 0; }
  .rail .r-info, .rail .r-web, .rail .r-clock { margin-top: 9px; }
  .panel { width: 265px; flex: none; background: #fff; border-right: 1px solid #999; padding: 3px 7px 0 5px; display: flex; flex-direction: column; }
  .panel h2 { display: flex; align-items: center; justify-content: space-between; height: 20px; padding: 0 5px 0 2px; }
  .pop { width: 10px; height: 9px; border: 1px solid #222; border-top-width: 2px; }
  .tree { border-collapse: collapse; table-layout: fixed; width: 100%; border: 1px solid #ddd; line-height: 14px; }
  .tree th { text-align: left; font-weight: 400; background: #eef0f0; height: 17px; padding: 0 5px; overflow: hidden; border-right: 1px solid #ccc; }
  .tree th:first-child { width: 160px; }
  .tree th:nth-child(2) { width: 80px; padding-left: 4px; }
  .tree th:last-child { padding: 0 0 0 1px; }
  .tree td { height: 16px; padding: 0 4px; border-right: 1px solid #e2e2e2; overflow: hidden; white-space: nowrap; }
  .tree td:first-child { padding: 0; }
  .tree tr:nth-child(even) td { background: #f7f8f8; }
  .sort { display: inline-block; border: 4px solid transparent; border-bottom: 5px solid #222; border-top: 0; margin-left: 10px; vertical-align: 1px; }
  .node { display: flex; align-items: center; gap: 2px; height: 15px; padding-left: 3px; }
  .node .ico { width: 13px; height: 13px; }
  .ex { width: 9px; height: 9px; font: 9px/6px 'Liberation Mono', monospace; text-align: center; border: 1px solid #ddd; margin-right: 1px; }
  .ex.none { border: 0; border-top: 1px dotted #bbb; align-self: end; }
  .leaf { margin-left: 23px; padding-left: 8px; gap: 1px; border-left: 1px dotted #bbb; height: 16px; }
  .leaf input { appearance: none; width: 11px; height: 11px; border: 1px solid #222; flex: none; background: #fff; }
  .leaf input::before { content: ''; display: block; width: 9px; height: 9px; background: #1fa83a; clip-path: polygon(5% 50%, 30% 42%, 42% 62%, 85% 5%, 98% 12%, 52% 98%, 34% 98%); }
  .dim { color: #aaa; }
  .strong { font-weight: 700; }
  .hscroll { display: flex; align-items: center; height: 13px; background: #f3f3f3; padding: 0 4px; }
  .hscroll i { width: 173px; height: 12px; background: #cdcdcd; margin: 0 auto 0 7px; }
  .hscroll span { font: 700 14px/10px 'Noto Sans', sans-serif; }
  .split { height: 4px; margin: 2px 0 0; background: #eee; border: 1px solid #aaa; border-width: 1px 0; }
  .fold { display: flex; justify-content: space-between; height: 19px; padding: 0 4px 0 5px; border-bottom: 1px solid #bbb; color: #1e84b5; font-size: 11px; }
  .fold svg { width: 9px; height: 8px; fill: none; stroke: #1e84b5; stroke-width: 2; }
  .scene { flex: 1; position: relative; background: linear-gradient(#aeb1b1, #c9cbcb 35%, #e6e8e9 75%, #e8e9ea); }
  .axis { position: absolute; left: 50px; bottom: 41px; width: 42px; height: 58px; }
  .bottle { position: absolute; left: 556px; bottom: 87px; width: 142px; height: 46px; }

  .dialog { position: absolute; left: 413px; top: 0; width: 320px; height: 264px; background: #e6e7e7; border: 1px solid #b5b8b8; padding: 0 4px; }
  .dialog h3 { display: flex; align-items: center; gap: 8px; height: 19px; margin: 0 -4px 3px; padding-left: 5px; background: #56807f; color: #f2f6f6; font-size: 11px; }
  .card { background: #fff; border-bottom: 1px solid #bbb; padding: 0 5px; margin-bottom: 3px; overflow: hidden; }
  .card h4 { color: #2a86b8; font-size: 11px; line-height: 20px; }
  .card.a { height: 57px; } .card.b { height: 68px; } .card.c { height: 19px; } .card.d { height: 52px; margin-bottom: 8px; }
  .card label { display: block; padding-left: 2px; }
  .chosen { width: 100%; height: 26px; margin: 3px 0 0 1px; justify-content: flex-start; gap: 4px; padding-left: 1px; background: #ffd163; }
  .card.b label { padding-top: 4px; }
  .card.b input { display: block; width: 100%; height: 19px; border: 1px solid #999; padding: 0 3px; margin-top: 2px; }
  .card.d label { display: flex; align-items: center; justify-content: space-between; padding-top: 4px; }
  .card.d select { width: 173px; height: 20px; border: 1px solid #999; padding: 0 3px; appearance: none; }
  .acts { display: flex; gap: 5px; padding-left: 107px; }
  .acts button { width: 42px; height: 20px; background: #d0d2d2; border: 1px solid #aaa; }
  .acts .ok { background: #98c6e0; border-color: #3c8fc8; outline: 1px dotted #888; outline-offset: -3px; }

  .status { display: grid; grid-template-columns: 1fr auto 1fr; align-items: center; height: 17px; flex: none; background: #f0f0f0; border-top: 1px solid #bbb; color: #000; }
  .status span { grid-column: 2; margin-right: 70px; font-size: 9px; }
  .status div { display: flex; justify-content: flex-end; gap: 3px; padding-right: 21px; }
  .status .ico:last-child { margin-left: 6px; }
  .taskbar { display: flex; align-items: center; gap: 2px; height: 32px; flex: none; background: #17364a; color: #f4fafd; }
  .taskbar > button { width: 37px; height: 30px; }
  .taskbar .first { margin-left: 2px; }
  .taskbar .app { background: #3b5468; border: 1px solid #5a7184; }
  .taskbar .on { background: #71828f; border-color: #a3b0b9; }
  .tray { display: flex; align-items: center; gap: 6px; margin-left: auto; padding-right: 14px; }
  .tray span { font-size: 12px; }
  .tray b { width: 12px; height: 12px; margin-left: 4px; font-size: 10px; line-height: 12px; background: #f2f2f2; color: #111; text-align: center; }
  .tray time { text-align: center; line-height: 15px; margin-left: 8px; }
  .tri { border: 3px solid transparent; border-bottom-color: #ddd; border-top: 0; margin: 0 4px 0 12px; }

  .explorer { position: absolute; left: 577px; top: 87px; width: 825px; height: 595px; display: flex; flex-direction: column; background: #fff; border: 1px solid #4aa7e0; color: #333; }
  .xtitle { display: flex; align-items: center; height: 24px; padding-left: 6px; gap: 4px; flex: none; color: #111; }
  .bar1 { width: 1px; height: 10px; background: #aaa; margin: 0 3px 0 2px; }
  .qat { border: 3px solid transparent; border-top-color: #222; border-bottom: 0; }
  .qat + .bar1 { margin: 0; }
  .xbtns { display: flex; margin-left: auto; padding-right: 14px; gap: 27px; }
  .xbtns button { height: 20px; }
  .tabs { display: flex; height: 21px; flex: none; padding-right: 4px; border-bottom: 1px solid #ddd; }
  .tabs > button { width: 43px; height: 19px; }
  .tabs .file { width: 45px; background: #1070cc; color: #fff; }
  .tabs .cur { width: 41px; height: 21px; background: #f5f6f7; border: 1px solid #ddd; border-bottom: 0; padding-bottom: 1px; }
  .help { display: flex; align-items: center; gap: 7px; margin-left: auto; }
  .help button { width: 11px; height: 11px; border-radius: 50%; background: #0a6fc9; color: #fff; font-size: 9px; font-weight: 700; }
  .ribbon { display: flex; height: 87px; flex: none; background: #f5f6f7; border-bottom: 1px solid #ddd; padding-top: 1px; }
  .group { display: flex; flex-direction: column; border-right: 1px solid #e0e1e2; height: 83px; }
  .group p { text-align: center; color: #666; line-height: 14px; }
  .items { display: flex; flex: 1; padding-top: 5px; min-height: 0; }
  .g1 { width: 209px; } .g2 { width: 149px; } .g3 { width: 110px; } .g4 { width: 101px; } .g5 { width: 68px; }
  .g1 .items { padding-left: 4px; } .g2 .items { padding-left: 2px; } .g3 .items { padding-left: 2px; } .g4 .items { padding-left: 2px; } .g5 .items { padding-left: 3px; }
  .big { flex-direction: column; justify-content: flex-start; width: 34px; line-height: 14px; white-space: pre; gap: 3px; }
  .big.pin { width: 46px; }
  .big.pin .ico { width: 18px; height: 18px; margin: 3px; }
  .big .caret { margin-top: -2px; }
  .stack { width: 40px; padding-left: 1px; }
  .stack .small { margin-top: 1px; margin-left: 3px; }
  .vr { width: 1px; height: 48px; background: #ddd; margin: 0 2px; }
  .g2 .big:last-child { width: 34px; }
  .off { color: #999; }
  .small { height: 18px; gap: 2px; justify-content: flex-start; }
  .small .ico { width: 13px; height: 13px; }
  .small .caret { margin-left: 2px; }
  .list { display: flex; flex-direction: column; padding-left: 3px; margin-top: -3px; }
  .loose { gap: 2px; margin-top: -1px; }

  .addr { display: flex; align-items: center; height: 26px; flex: none; padding-right: 10px; }
  .hist { display: flex; align-items: center; gap: 12px; padding: 0 5px 0 10px; }
  .hist button:nth-child(3) { margin: 0 -6px 0 -2px; }
  .path { display: flex; align-items: center; flex: 1; height: 18px; border: 1px solid #ddd; color: #111; }
  .path i { width: 14px; text-align: center; color: #666; font-size: 12px; }
  .path a { margin-right: 4px; }
  .path .ico + i { margin-right: 1px; }
  .grow { flex: 1; }
  .path button { width: 14px; height: 16px; border-left: 1px solid #e2e2e2; margin-left: 2px; }
  .search { display: flex; align-items: center; justify-content: space-between; width: 126px; height: 18px; border: 1px solid #ddd; margin-left: 8px; padding: 0 5px 0 6px; }
  .search input { width: 90px; }
  .search input::placeholder { color: #777; opacity: 1; }

  .xbody { display: flex; flex: 1; min-height: 0; }
  .places { width: 124px; flex: none; padding-top: 14px; color: #111; }
  .places a { display: flex; align-items: center; gap: 3px; height: 19px; margin-top: 7px; padding-left: 18px; white-space: nowrap; }
  .places .sub { margin-top: 0; padding-left: 25px; }
  .places a:first-child { margin-top: 0; }
  .places .sel { background: #d9d9d9; }
  .listing { position: relative; padding-left: 15px; }
  .files { border-collapse: collapse; table-layout: fixed; width: 461px; }
  .files th { height: 28px; text-align: left; font-weight: 400; color: #5a6f8a; border-right: 1px solid #e2e2e2; padding: 0 5px 2px; position: relative; }
  .files th:first-child { width: 205px; padding-left: 2px; border-left: 0; }
  .files th:nth-child(2), .files th:nth-child(3) { width: 96px; }
  .files th .ico { position: absolute; top: 0; left: 97px; }
  .files td { height: 17px; padding: 0 5px; color: #777; white-space: nowrap; line-height: 15px; }
  .files td:first-child { padding-left: 2px; color: #111; }
  .files td:last-child { text-align: right; }
  .fname { display: flex; align-items: center; gap: 3px; }
  .files .fname .ico { width: 14px; height: 14px; }
  .files tbody .sel { background: #cce6ff; outline: 1px solid #97cdf5; outline-offset: -1px; }
  .files tbody .hover { background: #e6f2fc; }
  .cursor { position: absolute; left: 88px; top: 158px; width: 12px; height: 18px; }
  .tip { position: absolute; left: 131px; top: 160px; width: 130px; padding: 1px 3px; background: #fff; border: 1px solid #888; line-height: 14px; color: #666; white-space: nowrap; }
  .xstatus { display: flex; align-items: center; gap: 16px; height: 19px; flex: none; padding: 0 6px 0 10px; color: #2f4a6a; }
  .xstatus div { display: flex; margin-left: auto; gap: 3px; }
  .xstatus .on { width: 18px; height: 18px; background: #cce8fa; border: 1px solid #4aa7e0; }

  .shade { position: absolute; inset: auto 0 0; height: 134px; background: linear-gradient(transparent, rgba(0, 0, 0, .4)); pointer-events: none; }
  .turn { position: absolute; top: 412px; filter: drop-shadow(0 0 2px #555); }
  .turn svg { width: 24px; height: 40px; fill: none; stroke: #eee; stroke-width: 3; }
  .prev { left: 10px; }
  .next { right: 9px; }
  .badge { position: absolute; right: -21px; top: 369px; width: 37px; height: 37px; border-radius: 50%; background: #35b765; border: 1px solid #d5eedd; color: #fff; line-height: 35px; padding-left: 3px; }

  .controls { padding: 12px 36px 28px; color: #fff; }
  .seek { display: block; appearance: none; width: 100%; height: 30px;
    background: linear-gradient(#439be4, #439be4) no-repeat left center / 31% 6px, linear-gradient(#2b2b2b, #2b2b2b) no-repeat center / 100% 3px; }
  .seek::-webkit-slider-thumb { appearance: none; width: 30px; height: 30px; border: 3px solid #439be4; border-radius: 50%; background: #000; }
  .times { display: flex; justify-content: space-between; font-size: 16px; line-height: 24px; margin-top: 3px; }
  .keys { display: grid; grid-template-columns: 1fr auto 1fr; margin-top: 11px; }
  .keys div { display: flex; }
  .keys div:last-child { justify-content: flex-end; }
  .keys button { position: relative; width: 75px; height: 60px; }
  .keys svg { width: 32px; height: 32px; fill: none; stroke: #fff; stroke-width: 2; }
  .dots { fill: #fff; stroke: none; }
  .jump span { position: absolute; top: 27px; font-size: 18px; line-height: 20px; }
</style>
